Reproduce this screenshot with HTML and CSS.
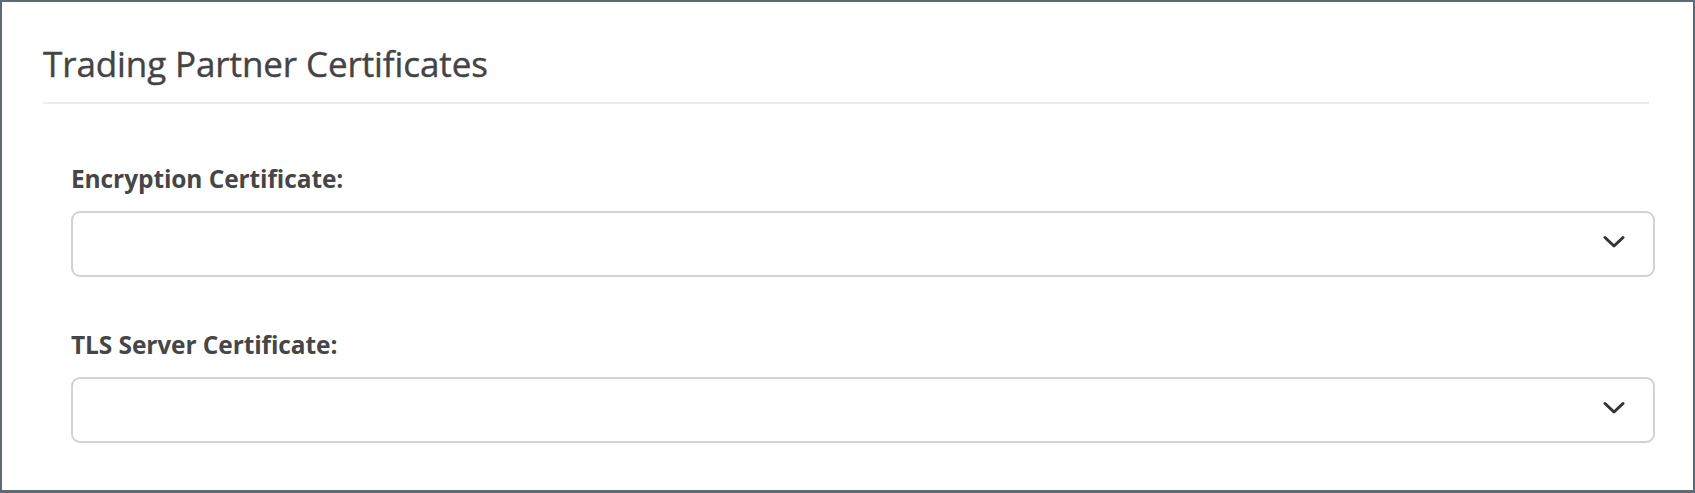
FILE: index.html
```html
<!DOCTYPE html>
<html lang="en">
<head>
<meta charset="utf-8">
<title>Trading Partner Certificates</title>
<link rel="stylesheet" href="styles.css">
</head>
<body>
<div class="card">
  <h3 class="card-title">Trading Partner Certificates</h3>
  <hr class="divider">
  <form class="form">
    <div class="field">
      <label class="field-label" for="enc">Encryption Certificate:</label>
      <div class="select-wrap">
        <select id="enc" class="select"><option></option></select>
        <svg class="chevron" width="22" height="14" viewBox="0 0 22 14"><polyline points="2,2.5 11,11 20,2.5" fill="none" stroke="#333" stroke-width="3" stroke-linecap="round" stroke-linejoin="round"/></svg>
      </div>
    </div>
    <div class="field">
      <label class="field-label" for="tls">TLS Server Certificate:</label>
      <div class="select-wrap">
        <select id="tls" class="select"><option></option></select>
        <svg class="chevron" width="22" height="14" viewBox="0 0 22 14"><polyline points="2,2.5 11,11 20,2.5" fill="none" stroke="#333" stroke-width="3" stroke-linecap="round" stroke-linejoin="round"/></svg>
      </div>
    </div>
  </form>
</div>
</body>
</html>
```

FILE: styles.css
```css
* { box-sizing: border-box; }
html, body { margin: 0; padding: 0; background: #fff; }
body { font-family: "Open Sans", "Noto Sans", sans-serif; color: #464646; }

.card {
  height: 493px;
  border-style: solid;
  border-color: #5e6b77;
  border-width: 2px 2px 3px 2px;
  padding: 40px 44px 0 41px;
  background: #fff;
}

.card-title {
  margin: 0;
  font-size: 35px;
  line-height: 44px;
  font-weight: 500;
  color: #444;
  letter-spacing: -0.1px;
  -webkit-text-stroke: 0.4px #444;
}

.divider {
  margin: 16px 0 0 0;
  border: 0;
  height: 2px;
  background: #ececec;
}

.form {
  margin: 60px -6px 0 28px;
  display: flex;
  flex-direction: column;
  gap: 53px;
}

.field { display: flex; flex-direction: column; gap: 17px; }

.field-label {
  font-size: 24.5px;
  line-height: 30px;
  font-weight: 700;
  color: #464646;
  letter-spacing: -0.1px;
}

.select-wrap { position: relative; }

.select {
  display: block;
  width: 100%;
  height: 66px;
  appearance: none;
  -webkit-appearance: none;
  border: 2px solid #cfd2d7;
  border-radius: 9px;
  background: #fff;
  font-family: inherit;
  font-size: 20px;
  color: #464646;
  padding: 0 60px 0 18px;
  outline: none;
}

.chevron {
  position: absolute;
  right: 30px;
  top: 24px;
  pointer-events: none;
}
```
